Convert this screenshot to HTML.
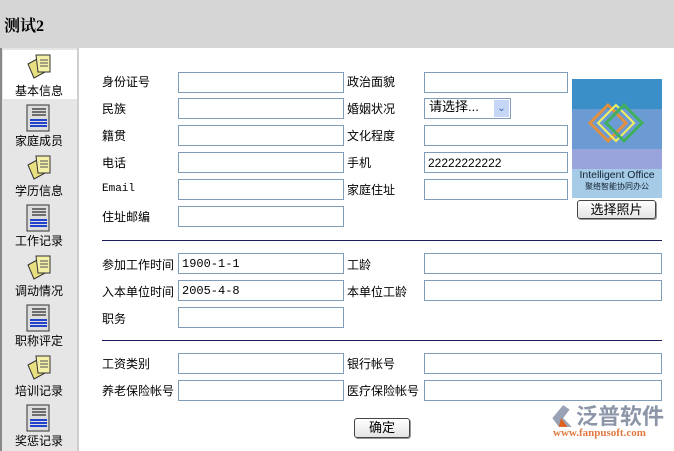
<!DOCTYPE html>
<html><head><meta charset="utf-8"><style>
*{margin:0;padding:0;box-sizing:border-box}
body{width:674px;height:451px;overflow:hidden;background:#fff;font-family:"Liberation Sans","Noto Sans CJK SC",sans-serif;font-size:12px;color:#000;position:relative}
.hdr{position:absolute;left:0;top:0;width:674px;height:48px;background:#d6d6d6}
.hdr b{position:absolute;left:4px;top:13px;font-size:16px;font-family:"Liberation Serif","Noto Serif CJK SC",serif}
.side{position:absolute;left:0;top:48px;width:79px;height:403px;background:#e6e6e6;border-right:2px solid #cfcfcf;border-left:2px solid #888}
.sel{position:absolute;left:3px;top:50px;width:74px;height:49px;background:#fff}
.it{position:absolute;left:0;width:78px;text-align:center;font-size:12px}
.ic{position:absolute;left:25px;width:28px;height:28px}
.l{position:absolute;font-size:12px}
.in{position:absolute;height:21px;border:1px solid #7f9db9;background:#fff;font-family:"Liberation Mono",monospace;font-size:12px;padding:3px 3px;line-height:14px}
.hr{position:absolute;left:102px;width:560px;height:1px;background:#1c1c5c}
.btn{position:absolute;border:1px solid #444;border-radius:3px;background:linear-gradient(#fff,#e4e4e4);text-align:center;font-size:13px;line-height:17px;box-shadow:1px 1px 0 #999}
</style></head><body>
<div class="hdr"><b>测试2</b></div>
<div class="side"></div>
<div class="sel"></div>
<svg class="ic" style="top:52px" viewBox="0 0 28 28"><path d="M3 12 L14 6 L20 20 L9 26Z" fill="#e8e080" stroke="#333"/><path d="M11 3 L25 3 L25 20 L13 20Z" fill="#f4f0a8" stroke="#333"/><path d="M15 8h8M15 11h8M15 14h8" stroke="#555"/></svg>
<div class="it" style="top:82px">基本信息</div>
<svg class="ic" style="top:104px" viewBox="0 0 28 28"><rect x="2" y="1" width="22" height="26" fill="#ddd" stroke="#333"/><path d="M7 5h14M7 8h14M7 11h14" stroke="#000"/><path d="M5 16h17M5 19h17M5 22h17" stroke="#24c" stroke-width="2"/></svg>
<div class="it" style="top:132px">家庭成员</div>
<svg class="ic" style="top:153px" viewBox="0 0 28 28"><path d="M3 12 L14 6 L20 20 L9 26Z" fill="#e8e080" stroke="#333"/><path d="M11 3 L25 3 L25 20 L13 20Z" fill="#f4f0a8" stroke="#333"/><path d="M15 8h8M15 11h8M15 14h8" stroke="#555"/></svg>
<div class="it" style="top:182px">学历信息</div>
<svg class="ic" style="top:204px" viewBox="0 0 28 28"><rect x="2" y="1" width="22" height="26" fill="#ddd" stroke="#333"/><path d="M7 5h14M7 8h14M7 11h14" stroke="#000"/><path d="M5 16h17M5 19h17M5 22h17" stroke="#24c" stroke-width="2"/></svg>
<div class="it" style="top:232px">工作记录</div>
<svg class="ic" style="top:253px" viewBox="0 0 28 28"><path d="M3 12 L14 6 L20 20 L9 26Z" fill="#e8e080" stroke="#333"/><path d="M11 3 L25 3 L25 20 L13 20Z" fill="#f4f0a8" stroke="#333"/><path d="M15 8h8M15 11h8M15 14h8" stroke="#555"/></svg>
<div class="it" style="top:282px">调动情况</div>
<svg class="ic" style="top:304px" viewBox="0 0 28 28"><rect x="2" y="1" width="22" height="26" fill="#ddd" stroke="#333"/><path d="M7 5h14M7 8h14M7 11h14" stroke="#000"/><path d="M5 16h17M5 19h17M5 22h17" stroke="#24c" stroke-width="2"/></svg>
<div class="it" style="top:332px">职称评定</div>
<svg class="ic" style="top:353px" viewBox="0 0 28 28"><path d="M3 12 L14 6 L20 20 L9 26Z" fill="#e8e080" stroke="#333"/><path d="M11 3 L25 3 L25 20 L13 20Z" fill="#f4f0a8" stroke="#333"/><path d="M15 8h8M15 11h8M15 14h8" stroke="#555"/></svg>
<div class="it" style="top:382px">培训记录</div>
<svg class="ic" style="top:404px" viewBox="0 0 28 28"><rect x="2" y="1" width="22" height="26" fill="#ddd" stroke="#333"/><path d="M7 5h14M7 8h14M7 11h14" stroke="#000"/><path d="M5 16h17M5 19h17M5 22h17" stroke="#24c" stroke-width="2"/></svg>
<div class="it" style="top:432px">奖惩记录</div>

<div class="l" style="left:102px;top:73px">身份证号</div><div class="in" style="left:178px;top:72px;width:166px"></div>
<div class="l" style="left:102px;top:100px">民族</div><div class="in" style="left:178px;top:98px;width:166px"></div>
<div class="l" style="left:102px;top:127px">籍贯</div><div class="in" style="left:178px;top:125px;width:166px"></div>
<div class="l" style="left:102px;top:154px">电话</div><div class="in" style="left:178px;top:152px;width:166px"></div>
<div class="l" style="left:102px;top:183px;font-family:'Liberation Mono',monospace;font-size:11px">Email</div><div class="in" style="left:178px;top:179px;width:166px"></div>
<div class="l" style="left:102px;top:208px">住址邮编</div><div class="in" style="left:178px;top:206px;width:166px"></div>

<div class="l" style="left:347px;top:73px">政治面貌</div><div class="in" style="left:424px;top:72px;width:144px"></div>
<div class="l" style="left:347px;top:100px">婚姻状况</div>
<div class="in" style="left:424px;top:98px;width:87px;font-family:'Liberation Sans','Noto Sans CJK SC',sans-serif;font-size:13px;padding:1px 4px">请选择...<span style="position:absolute;right:1px;top:1px;width:15px;height:17px;background:#c6d6f6;color:#3560b0;font-size:10px;text-align:center;line-height:17px">&#8964;</span></div>
<div class="l" style="left:347px;top:127px">文化程度</div><div class="in" style="left:424px;top:125px;width:144px"></div>
<div class="l" style="left:347px;top:154px">手机</div><div class="in" style="left:424px;top:152px;width:144px;font-family:'Liberation Sans',sans-serif">22222222222</div>
<div class="l" style="left:347px;top:181px">家庭住址</div><div class="in" style="left:424px;top:179px;width:144px"></div>

<svg style="position:absolute;left:572px;top:79px" width="90" height="119" viewBox="0 0 90 119">
<rect width="90" height="30" fill="#3b8fc9"/><rect y="30" width="90" height="40" fill="#6c9bd4"/><rect y="70" width="90" height="20" fill="#9aa4dc"/><rect y="90" width="90" height="29" fill="#a6cbe6"/>
<path d="M36 62 L18 44 L36 26 L54 44Z" fill="none" stroke="#e09040" stroke-width="3"/>
<path d="M44 62 L26 44 L44 26 L62 44Z" fill="none" stroke="#f0f060" stroke-width="2"/>
<path d="M52 62 L34 44 L52 26 L70 44Z" fill="none" stroke="#40b060" stroke-width="3"/>
<text x="45" y="99" text-anchor="middle" font-size="10.5" fill="#123" font-family="Liberation Sans">Intelligent Office</text>
<text x="45" y="110" text-anchor="middle" font-size="8" fill="#123" font-family="Noto Sans CJK SC">聚络智能协同办公</text>
</svg>
<div class="btn" style="left:577px;top:200px;width:79px;height:19px">选择照片</div>

<div class="hr" style="top:240px"></div>
<div class="l" style="left:102px;top:256px">参加工作时间</div><div class="in" style="left:178px;top:253px;width:166px">1900-1-1</div>
<div class="l" style="left:102px;top:283px">入本单位时间</div><div class="in" style="left:178px;top:280px;width:166px">2005-4-8</div>
<div class="l" style="left:102px;top:310px">职务</div><div class="in" style="left:178px;top:307px;width:166px"></div>
<div class="l" style="left:347px;top:256px">工龄</div><div class="in" style="left:424px;top:253px;width:238px"></div>
<div class="l" style="left:347px;top:283px">本单位工龄</div><div class="in" style="left:424px;top:280px;width:238px"></div>

<div class="hr" style="top:340px"></div>
<div class="l" style="left:102px;top:355px">工资类别</div><div class="in" style="left:178px;top:353px;width:166px"></div>
<div class="l" style="left:102px;top:382px">养老保险帐号</div><div class="in" style="left:178px;top:380px;width:166px"></div>
<div class="l" style="left:347px;top:355px">银行帐号</div><div class="in" style="left:424px;top:353px;width:238px"></div>
<div class="l" style="left:347px;top:382px">医疗保险帐号</div><div class="in" style="left:424px;top:380px;width:238px"></div>

<div class="btn" style="left:354px;top:418px;width:56px;height:20px">确定</div>

<svg style="position:absolute;left:548px;top:403px" width="26" height="26" viewBox="0 0 24 24"><path d="M14 2 L4 14 L10 22 L22 22 L14 14 L20 6Z" fill="#9aa3b5"/><path d="M12 14 L18 22 L10 22Z" fill="#e06020"/></svg>
<div class="l" style="left:576px;top:399px;font-size:22px;color:#8c96a8;font-weight:bold;letter-spacing:0px">泛普软件</div>
<div class="l" style="left:553px;top:427px;font-size:11px;color:#e07840;font-family:'Liberation Serif',serif;font-weight:bold">www.fanpusoft.com</div>
</body></html>
